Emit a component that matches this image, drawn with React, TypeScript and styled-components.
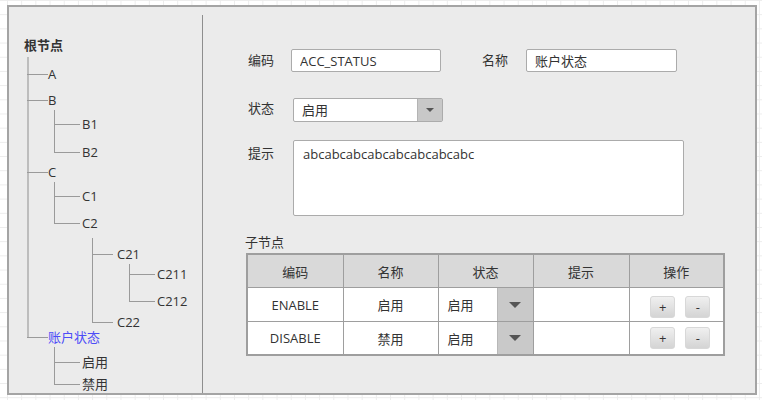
import React from "react";
import styled, { createGlobalStyle } from "styled-components";

const FONT = `"Open Sans", "Noto Sans CJK SC", sans-serif`;

const GlobalStyle = createGlobalStyle`
  html, body {
    margin: 0;
    padding: 0;
  }

  body {
    width: 762px;
    height: 400px;
    overflow: hidden;
    background-color: #ffffff;
    background-image: linear-gradient(to right, #ececec 1px, transparent 1px),
      linear-gradient(to bottom, #ececec 1px, transparent 1px);
    background-size: 14.2px 14.2px;
    background-position: 7px 0;
    font-family: ${FONT};
    font-size: 13px;
    color: #333333;
  }
`;

interface TreeNode {
  label: string;
  mt: number;
  active?: boolean;
  children?: TreeNode[];
}

// per depth: stem offset from parent label, arm length, gap to label, stem start
const LEVELS = [
  { indent: 3, arm: 21, gap: 0, start: 5, stem: 2, color: "#bdbdbd" },
  { indent: 6, arm: 26, gap: 2, start: 3, stem: 1, color: "#9a9a9a" },
  { indent: 10, arm: 21, gap: 4, start: 8, stem: 1, color: "#9a9a9a" },
  { indent: 12, arm: 26, gap: 2, start: 3, stem: 1, color: "#9a9a9a" },
];

const tree: TreeNode[] = [
  { label: "A", mt: 15 },
  {
    label: "B",
    mt: 12,
    children: [
      { label: "B1", mt: 10 },
      { label: "B2", mt: 14 },
    ],
  },
  {
    label: "C",
    mt: 6,
    children: [
      { label: "C1", mt: 10 },
      {
        label: "C2",
        mt: 13,
        children: [
          {
            label: "C21",
            mt: 17,
            children: [
              { label: "C211", mt: 6 },
              { label: "C212", mt: 13 },
            ],
          },
          { label: "C22", mt: 7 },
        ],
      },
    ],
  },
  {
    label: "账户状态",
    mt: 1,
    active: true,
    children: [
      { label: "启用", mt: 11 },
      { label: "禁用", mt: 8 },
    ],
  },
];

const Branch: React.FC<{ nodes: TreeNode[]; depth: number }> = ({
  nodes,
  depth,
}) => {
  const lv = LEVELS[depth];
  return (
    <Children $indent={lv.indent}>
      {nodes.map((n, i) => (
        <Item
          key={n.label}
          $mt={n.mt}
          $arm={lv.arm}
          $gap={lv.gap}
          $start={i === 0 ? lv.start : 0}
          $last={i === nodes.length - 1}
          $stem={lv.stem}
          $stemColor={lv.color}
        >
          <NodeLabel $active={n.active}>{n.label}</NodeLabel>
          {n.children && <Branch nodes={n.children} depth={depth + 1} />}
        </Item>
      ))}
    </Children>
  );
};

const rows = [
  { code: "ENABLE", name: "启用", status: "启用" },
  { code: "DISABLE", name: "禁用", status: "启用" },
];

const App: React.FC = () => {
  return (
    <>
      <GlobalStyle />
      <Panel>
        <Sidebar>
          <RootLabel>根节点</RootLabel>
          <Branch nodes={tree} depth={0} />
        </Sidebar>

        <Content>
          <FormRow>
            <Label $w={43} $lh={23}>
              编码
            </Label>
            <TextInput value="ACC_STATUS" readOnly />
            <Label $w={44} $lh={23} $ml={41}>
              名称
            </Label>
            <TextInput value="账户状态" readOnly $w={151} />
          </FormRow>

          <FormRow $mt={26}>
            <Label $w={45} $lh={20}>
              状态
            </Label>
            <Select>
              <SelectValue>启用</SelectValue>
              <SelectArrow>
                <Caret $size={4} />
              </SelectArrow>
            </Select>
          </FormRow>

          <FormRow $mt={18}>
            <Label $w={45} $lh={26}>
              提示
            </Label>
            <TextArea value="abcabcabcabcabcabcabcabc" readOnly />
          </FormRow>

          <SubTitle>子节点</SubTitle>
          <Grid>
            <colgroup>
              <col style={{ width: 96 }} />
              <col style={{ width: 95 }} />
              <col style={{ width: 95 }} />
              <col style={{ width: 96 }} />
              <col style={{ width: 95 }} />
            </colgroup>
            <thead>
              <tr>
                <HeadCell>编码</HeadCell>
                <HeadCell>名称</HeadCell>
                <HeadCell>状态</HeadCell>
                <HeadCell>提示</HeadCell>
                <HeadCell>操作</HeadCell>
              </tr>
            </thead>
            <tbody>
              {rows.map((r, i) => (
                <tr key={r.code}>
                  <Cell $h={i === 0 ? 34 : 33}>{r.code}</Cell>
                  <Cell>{r.name}</Cell>
                  <Cell>
                    <CellSelect $h={i === 0 ? 34 : 33}>
                      <CellSelectValue>{r.status}</CellSelectValue>
                      <CellSelectArrow>
                        <Caret $size={6} />
                      </CellSelectArrow>
                    </CellSelect>
                  </Cell>
                  <Cell />
                  <Cell>
                    <Ops $pt={i === 0 ? 4 : 0}>
                      <OpButton>+</OpButton>
                      <OpButton>-</OpButton>
                    </Ops>
                  </Cell>
                </tr>
              ))}
            </tbody>
          </Grid>
        </Content>
      </Panel>
    </>
  );
};

export default App;

const Panel = styled.div`
  box-sizing: border-box;
  display: flex;
  margin: 5px 0 0 7px;
  width: 750px;
  height: 390px;
  border: 2px solid #a4a4a4;
  background: #ebebeb;
`;

const Sidebar = styled.div`
  box-sizing: border-box;
  flex-shrink: 0;
  width: 194px;
  margin-top: 8px;
  padding: 23px 0 0 15px;
  border-right: 1px solid #8e8e8e;
`;

const RootLabel = styled.div`
  height: 14px;
  line-height: 14px;
  font-weight: bold;
  white-space: nowrap;
`;

const Children = styled.ul<{ $indent: number }>`
  list-style: none;
  margin: 0 0 0 ${({ $indent }) => $indent}px;
  padding: 0;
`;

const Item = styled.li<{
  $mt: number;
  $arm: number;
  $gap: number;
  $start: number;
  $last: boolean;
  $stem: number;
  $stemColor: string;
}>`
  position: relative;
  padding-top: ${({ $mt }) => $mt}px;
  padding-left: ${({ $arm, $gap }) => $arm + $gap}px;

  &::before {
    content: "";
    position: absolute;
    left: 0;
    width: ${({ $stem }) => $stem}px;
    top: ${({ $start }) => $start}px;
    ${({ $last, $mt, $start }) =>
      $last ? `height: ${$mt + 8 - $start}px;` : `bottom: 0;`}
    background: ${({ $stemColor }) => $stemColor};
  }

  &::after {
    content: "";
    position: absolute;
    left: 0;
    top: ${({ $mt }) => $mt + 7}px;
    width: ${({ $arm }) => $arm}px;
    height: 1px;
    background: #9a9a9a;
  }
`;

const NodeLabel = styled.span<{ $active?: boolean }>`
  display: block;
  height: 14px;
  line-height: 14px;
  white-space: nowrap;
  color: ${({ $active }) => ($active ? "#4d4df7" : "#333333")};
`;

const Content = styled.div`
  flex: 1;
  padding: 42px 0 0 45px;
`;

const FormRow = styled.div<{ $mt?: number }>`
  display: flex;
  align-items: flex-start;
  margin-top: ${({ $mt }) => $mt ?? 0}px;
`;

const Label = styled.label<{ $w: number; $lh: number; $ml?: number }>`
  flex-shrink: 0;
  width: ${({ $w }) => $w}px;
  margin-left: ${({ $ml }) => $ml ?? 0}px;
  line-height: ${({ $lh }) => $lh}px;
  white-space: nowrap;
`;

const TextInput = styled.input<{ $w?: number }>`
  box-sizing: border-box;
  width: ${({ $w }) => $w ?? 150}px;
  height: 23px;
  margin: 0;
  padding: 0 8px;
  border: 1px solid #ababab;
  border-radius: 2px;
  background: #ffffff;
  font-family: ${FONT};
  font-size: 13px;
  color: #333333;
  outline: none;
`;

const Select = styled.div`
  box-sizing: border-box;
  display: flex;
  width: 150px;
  height: 24px;
  border: 1px solid #ababab;
  border-radius: 2px;
  background: #ffffff;
`;

const SelectValue = styled.div`
  flex: 1;
  padding-left: 8px;
  line-height: 22px;
`;

const SelectArrow = styled.div`
  display: flex;
  align-items: center;
  justify-content: center;
  width: 24px;
  background: #c8c8c8;
  border-left: 1px solid #b4b4b4;
`;

const Caret = styled.span<{ $size: number }>`
  width: 0;
  height: 0;
  border-left: ${({ $size }) => $size}px solid transparent;
  border-right: ${({ $size }) => $size}px solid transparent;
  border-top: ${({ $size }) => $size}px solid #555555;
`;

const TextArea = styled.textarea`
  box-sizing: border-box;
  width: 391px;
  height: 76px;
  margin: 0;
  padding: 5px 9px;
  border: 1px solid #ababab;
  border-radius: 2px;
  background: #ffffff;
  font-family: ${FONT};
  font-size: 13px;
  line-height: 16px;
  color: #333333;
  resize: none;
  outline: none;
`;

const SubTitle = styled.div`
  margin: 17px 0 0 -3px;
  line-height: 18px;
`;

const Grid = styled.table`
  margin: 2px 0 0 -2px;
  width: 477px;
  table-layout: fixed;
  border-collapse: collapse;
  border: 2px solid #9e9e9e;
`;

const HeadCell = styled.th`
  height: 32px;
  padding: 0;
  border: 1px solid #9e9e9e;
  background: #d9d9d9;
  font-weight: normal;
  text-align: center;
`;

const Cell = styled.td<{ $h?: number }>`
  height: ${({ $h }) => ($h ? `${$h - 1}px` : "auto")};
  padding: 0;
  border: 1px solid #9e9e9e;
  background: #ffffff;
  text-align: center;
`;

const CellSelect = styled.div<{ $h: number }>`
  display: flex;
  height: ${({ $h }) => $h - 1}px;
`;

const CellSelectValue = styled.div`
  display: flex;
  align-items: center;
  flex: 1;
  padding-left: 9px;
  background: #ffffff;
`;

const CellSelectArrow = styled.div`
  display: flex;
  align-items: center;
  justify-content: center;
  width: 35px;
  background: #c9c9c9;
  border-left: 1px solid #b8b8b8;
`;

const Ops = styled.div<{ $pt: number }>`
  display: flex;
  justify-content: center;
  gap: 10px;
  padding: ${({ $pt }) => $pt}px 0 0 8px;
`;

const OpButton = styled.button`
  box-sizing: border-box;
  width: 25px;
  height: 22px;
  padding: 0;
  border: 1px solid #d8d8d8;
  border-radius: 3px;
  background: linear-gradient(#f0f0f0, #d4d4d4);
  font-family: ${FONT};
  font-size: 13px;
  line-height: 20px;
  color: #333333;
`;
